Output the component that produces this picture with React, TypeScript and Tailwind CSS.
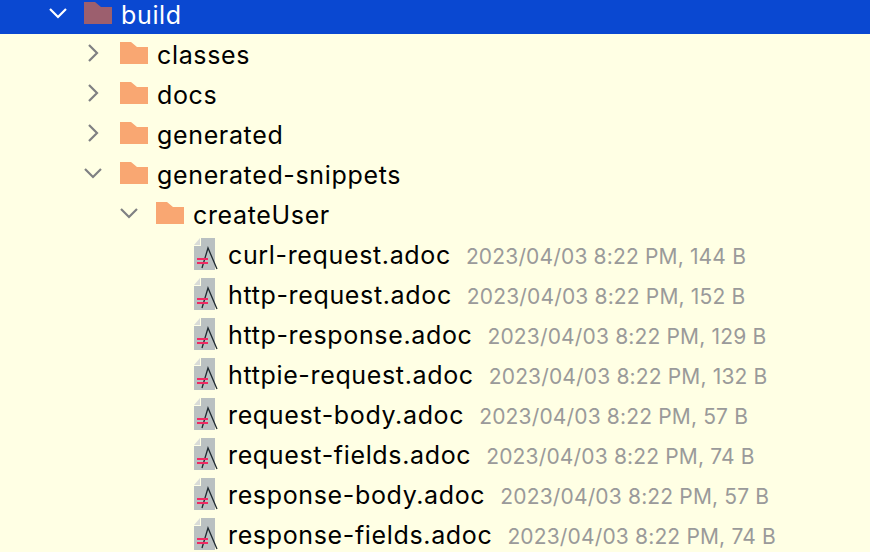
const files = [
  { name: 'curl-request.adoc', meta: '2023/04/03 8:22 PM, 144 B' },
  { name: 'http-request.adoc', meta: '2023/04/03 8:22 PM, 152 B' },
  { name: 'http-response.adoc', meta: '2023/04/03 8:22 PM, 129 B' },
  { name: 'httpie-request.adoc', meta: '2023/04/03 8:22 PM, 132 B' },
  { name: 'request-body.adoc', meta: '2023/04/03 8:22 PM, 57 B' },
  { name: 'request-fields.adoc', meta: '2023/04/03 8:22 PM, 74 B' },
  { name: 'response-body.adoc', meta: '2023/04/03 8:22 PM, 57 B' },
  { name: 'response-fields.adoc', meta: '2023/04/03 8:22 PM, 74 B' },
];

const Chevron = ({ open, white }: { open?: boolean; white?: boolean }) => (
  <svg width="20" height="20" viewBox="0 0 20 20" fill="none" className={`-mt-[2px] ${white ? 'text-white' : 'text-[#7f8083]'}`} stroke="currentColor" strokeWidth="2.2">
    {open ? <path d="M2 6l8 8 8-8" /> : <path d="M6 2l8 8-8 8" />}
  </svg>
);

const Folder = ({ dark }: { dark?: boolean }) => (
  <svg width="28" height="22" viewBox="0 0 28 22" className={`-mt-[2px] ${dark ? 'text-[#9c5f6e]' : 'text-[#f9a772]'}`}>
    <path d="M0 0h11l6 5h11v17H0z" fill="currentColor" />
  </svg>
);

const AdocIcon = () => (
  <svg width="26" height="32" viewBox="0 0 26 32" fill="none" className="shrink-0">
    <path d="M8 0h14v32H1V8h7z" fill="#b9c0c1" />
    <path d="M7 0v7H1z" fill="#d9dcd8" />
    <path d="M9 30L15 10l9 21" stroke="#1f2a30" strokeWidth="1.3" />
    <path d="M4 21h11M4 25h11" stroke="#f02a62" strokeWidth="1.8" />
  </svg>
);

const Row = ({ indent, children, selected }: { indent: string; children: React.ReactNode; selected?: boolean }) => (
  <div className={`flex h-10 items-center ${indent} ${selected ? 'bg-[#0a48d1] text-white' : 'text-black'}`}>{children}</div>
);

const FolderRow = ({ label, indent, open }: { label: string; indent: string; open?: boolean }) => (
  <Row indent={indent}>
    <span className="flex w-[37px] shrink-0">
      <Chevron open={open} />
    </span>
    <Folder />
    <span className="ml-[9px] pt-[3px]">{label}</span>
  </Row>
);

export default function App() {
  return (
    <div className="h-[552px] w-[870px] overflow-hidden bg-[#ffffe4] font-['Inter',sans-serif] text-[25px] tracking-[0.65px]">
      <div className="-mt-[6px]">
        <Row indent="pl-[48px]" selected>
          <span className="flex w-[36px] shrink-0">
            <Chevron open white />
          </span>
          <Folder dark />
          <span className="ml-[9px] pt-[3px]">build</span>
        </Row>
        <FolderRow label="classes" indent="pl-[83px]" />
        <FolderRow label="docs" indent="pl-[83px]" />
        <FolderRow label="generated" indent="pl-[83px]" />
        <FolderRow label="generated-snippets" indent="pl-[83px]" open />
        <FolderRow label="createUser" indent="pl-[119px]" open />
        {files.map((f) => (
          <Row key={f.name} indent="pl-[193px]">
            <AdocIcon />
            <span className="ml-[9px] whitespace-nowrap pt-[3px]">{f.name}</span>
            <span className="ml-[15px] whitespace-nowrap pt-[5px] text-[21px] tracking-[0.16px] text-[#9a9a9a]">{f.meta}</span>
          </Row>
        ))}
      </div>
    </div>
  );
}
